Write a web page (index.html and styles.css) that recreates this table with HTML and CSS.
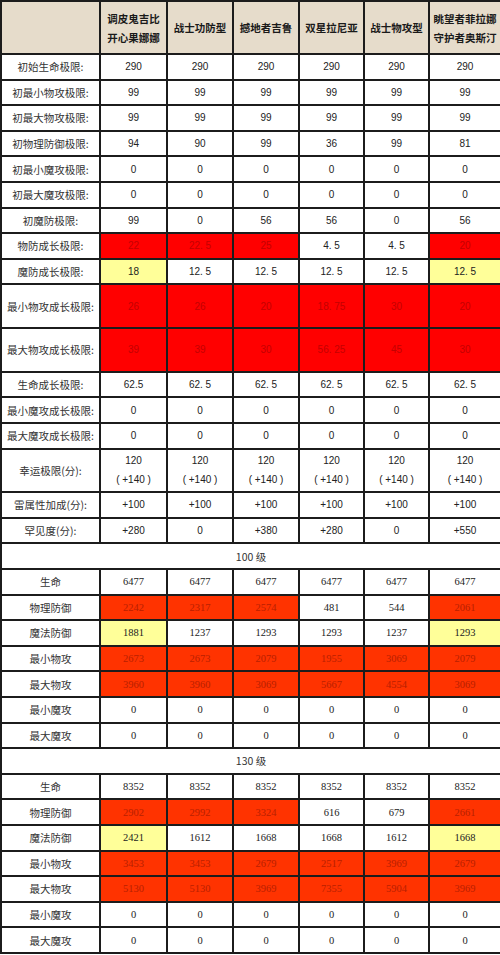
FILE: index.html
```html
<!DOCTYPE html>
<html lang="zh-CN">
<head>
<meta charset="utf-8">
<title>宠物成长极限</title>
<link rel="stylesheet" href="styles.css">
</head>
<body>
<table class="stats">
  <colgroup>
    <col class="c-label"><col class="c1"><col class="c2"><col class="c3"><col class="c4"><col class="c5"><col class="c6">
  </colgroup>
  <tbody class="upper">
    <tr class="head">
      <th></th>
      <th>调皮鬼吉比<br>开心果娜娜</th>
      <th>战士功防型</th>
      <th>撼地者吉鲁</th>
      <th>双星拉尼亚</th>
      <th>战士物攻型</th>
      <th>眺望者菲拉娜<br>守护者奥斯汀</th>
    </tr>
    <tr><td class="label">初始生命极限:</td><td>290</td><td>290</td><td>290</td><td>290</td><td>290</td><td>290</td></tr>
    <tr><td class="label">初最小物攻极限:</td><td>99</td><td>99</td><td>99</td><td>99</td><td>99</td><td>99</td></tr>
    <tr><td class="label">初最大物攻极限:</td><td>99</td><td>99</td><td>99</td><td>99</td><td>99</td><td>99</td></tr>
    <tr><td class="label">初物理防御极限:</td><td>94</td><td>90</td><td>99</td><td>36</td><td>99</td><td>81</td></tr>
    <tr><td class="label">初最小魔攻极限:</td><td>0</td><td>0</td><td>0</td><td>0</td><td>0</td><td>0</td></tr>
    <tr><td class="label">初最大魔攻极限:</td><td>0</td><td>0</td><td>0</td><td>0</td><td>0</td><td>0</td></tr>
    <tr><td class="label">初魔防极限:</td><td>99</td><td>0</td><td>56</td><td>56</td><td>0</td><td>56</td></tr>
    <tr><td class="label">物防成长极限:</td><td class="red">22</td><td class="red">22. 5</td><td class="red">25</td><td>4. 5</td><td>4. 5</td><td class="red">20</td></tr>
    <tr><td class="label">魔防成长极限:</td><td class="yellow">18</td><td>12. 5</td><td>12. 5</td><td>12. 5</td><td>12. 5</td><td class="yellow">12. 5</td></tr>
    <tr class="tall"><td class="label">最小物攻成长极限:</td><td class="red">26</td><td class="red">26</td><td class="red">20</td><td class="red">18. 75</td><td class="red">30</td><td class="red">20</td></tr>
    <tr class="tall"><td class="label">最大物攻成长极限:</td><td class="red">39</td><td class="red">39</td><td class="red">30</td><td class="red">56. 25</td><td class="red">45</td><td class="red">30</td></tr>
    <tr><td class="label">生命成长极限:</td><td>62.5</td><td>62. 5</td><td>62. 5</td><td>62. 5</td><td>62. 5</td><td>62. 5</td></tr>
    <tr><td class="label">最小魔攻成长极限:</td><td>0</td><td>0</td><td>0</td><td>0</td><td>0</td><td>0</td></tr>
    <tr><td class="label">最大魔攻成长极限:</td><td>0</td><td>0</td><td>0</td><td>0</td><td>0</td><td>0</td></tr>
    <tr class="tall"><td class="label">幸运极限(分):</td><td>120<br>( +140 )</td><td>120<br>( +140 )</td><td>120<br>( +140 )</td><td>120<br>( +140 )</td><td>120<br>( +140 )</td><td>120<br>( +140 )</td></tr>
    <tr><td class="label">雷属性加成(分):</td><td>+100</td><td>+100</td><td>+100</td><td>+100</td><td>+100</td><td>+100</td></tr>
    <tr><td class="label">罕见度(分):</td><td>+280</td><td>0</td><td>+380</td><td>+280</td><td>0</td><td>+550</td></tr>
  </tbody>
  <tbody class="lower">
    <tr class="level"><td colspan="7">100 级</td></tr>
    <tr><td class="label">生命</td><td>6477</td><td>6477</td><td>6477</td><td>6477</td><td>6477</td><td>6477</td></tr>
    <tr><td class="label">物理防御</td><td class="orange">2242</td><td class="orange">2317</td><td class="orange">2574</td><td>481</td><td>544</td><td class="orange">2061</td></tr>
    <tr><td class="label">魔法防御</td><td class="yellow">1881</td><td>1237</td><td>1293</td><td>1293</td><td>1237</td><td class="yellow">1293</td></tr>
    <tr><td class="label">最小物攻</td><td class="orange">2673</td><td class="orange">2673</td><td class="orange">2079</td><td class="orange">1955</td><td class="orange">3069</td><td class="orange">2079</td></tr>
    <tr><td class="label">最大物攻</td><td class="orange">3960</td><td class="orange">3960</td><td class="orange">3069</td><td class="orange">5667</td><td class="orange">4554</td><td class="orange">3069</td></tr>
    <tr><td class="label">最小魔攻</td><td>0</td><td>0</td><td>0</td><td>0</td><td>0</td><td>0</td></tr>
    <tr><td class="label">最大魔攻</td><td>0</td><td>0</td><td>0</td><td>0</td><td>0</td><td>0</td></tr>
    <tr class="level"><td colspan="7">130 级</td></tr>
    <tr><td class="label">生命</td><td>8352</td><td>8352</td><td>8352</td><td>8352</td><td>8352</td><td>8352</td></tr>
    <tr><td class="label">物理防御</td><td class="orange">2902</td><td class="orange">2992</td><td class="orange">3324</td><td>616</td><td>679</td><td class="orange">2661</td></tr>
    <tr><td class="label">魔法防御</td><td class="yellow">2421</td><td>1612</td><td>1668</td><td>1668</td><td>1612</td><td class="yellow">1668</td></tr>
    <tr><td class="label">最小物攻</td><td class="orange">3453</td><td class="orange">3453</td><td class="orange">2679</td><td class="orange">2517</td><td class="orange">3969</td><td class="orange">2679</td></tr>
    <tr><td class="label">最大物攻</td><td class="orange">5130</td><td class="orange">5130</td><td class="orange">3969</td><td class="orange">7355</td><td class="orange">5904</td><td class="orange">3969</td></tr>
    <tr><td class="label">最小魔攻</td><td>0</td><td>0</td><td>0</td><td>0</td><td>0</td><td>0</td></tr>
    <tr><td class="label">最大魔攻</td><td>0</td><td>0</td><td>0</td><td>0</td><td>0</td><td>0</td></tr>
  </tbody>
</table>
</body>
</html>
```

FILE: styles.css
```css
html, body {
  margin: 0;
  padding: 0;
  background: #ffffff;
}

.stats {
  width: 500px;
  table-layout: fixed;
  border-collapse: collapse;
  border: 2px solid #2a2a2a;
  font-family: "Liberation Sans", "Noto Sans CJK SC", sans-serif;
  color: #222;
}

.c-label { width: 99px; }
.c1 { width: 67px; }
.c2 { width: 66px; }
.c3 { width: 66px; }
.c4 { width: 65px; }
.c5 { width: 65px; }
.c6 { width: 72px; }

.stats th,
.stats td {
  border: 2px solid #1c1c1c;
  padding: 0;
  text-align: center;
  vertical-align: middle;
  font-size: 10px;
  line-height: 19px;
}

.stats tr {
  height: 25.6px;
}

.stats tr.head {
  height: 53px;
}

.stats tr.tall {
  height: 43.7px;
}

.head th {
  background: #e6dccb;
  font-family: "Noto Sans CJK SC", sans-serif;
  font-weight: 700;
  font-size: 10.5px;
  color: #1a1a1a;
  line-height: 19px;
}

.stats td.label {
  font-family: "Noto Sans CJK SC", sans-serif;
  font-size: 10.5px;
  color: #333;
}

.upper td {
  font-family: "Liberation Sans", "Noto Sans CJK SC", sans-serif;
}

.lower td {
  font-family: "Liberation Serif", "Noto Sans CJK SC", serif;
  font-size: 10.5px;
}

.stats .level td {
  font-family: "Noto Sans CJK SC", sans-serif;
  font-size: 10.5px;
  color: #333;
  background: #fff;
}

.stats td.red {
  background: #ff0000;
  color: #c40000;
}

.stats td.orange {
  background: #ff3300;
  color: #b82000;
}

.stats td.yellow {
  background: #ffff99;
}
```
